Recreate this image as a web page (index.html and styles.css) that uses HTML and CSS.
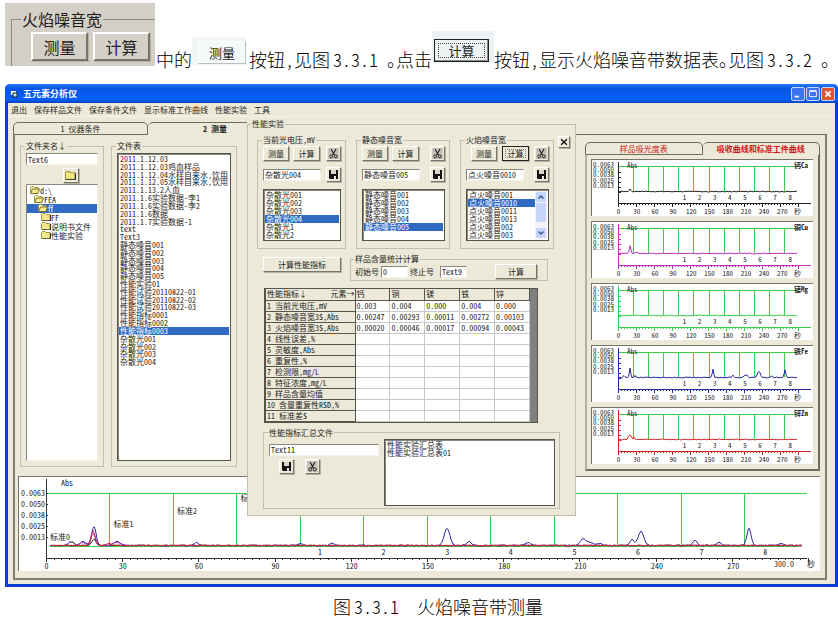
FILE: index.html
```html
<!DOCTYPE html>
<html lang="zh-CN">
<head>
    <meta charset="UTF-8">
    <meta name="viewport" content="width=device-width, initial-scale=1.0">
    <title>五元素分析仪</title>
    <link rel="stylesheet" href="styles.css">
</head>
<body>
    <svg class="sprite" aria-hidden="true">
        <symbol id="i-cut" viewBox="0 0 11 11">
            <rect width="11" height="11" fill="#c8c6bc"/>
            <path d="M3 1l3.4 6M8 1L4.6 7" stroke="#222" stroke-width="1.2" fill="none"/>
            <circle cx="3.2" cy="8.4" r="1.5" stroke="#222" fill="none"/>
            <circle cx="7.8" cy="8.4" r="1.5" stroke="#222" fill="none"/>
        </symbol>
        <symbol id="i-save" viewBox="0 0 11 11">
            <path d="M1 1h9v9H2L1 9z" fill="#111"/>
            <path d="M3 1h5v4H3z" fill="#d8d6cc"/>
            <path d="M6 7h2v3H6z" fill="#eee"/>
        </symbol>
        <symbol id="i-folder" viewBox="0 0 10 8">
            <path d="M.5 7.500v-6l1-1h2.500l1 1h4v6z" fill="#f3e98a" stroke="#a39a3c"/>
            <path d="M9.500 2v6H1" stroke="#333" fill="none"/>
        </symbol>
        <symbol id="i-open" viewBox="0 0 10 8">
            <path d="M.5 7V1.500l1-1h2l1 1h3.500V3" fill="#f7f2b4" stroke="#a39a3c"/>
            <path d="M.5 7.500L2.500 3h7L8 7.500z" fill="#f3e98a" stroke="#7b7430"/>
        </symbol>
    </svg>

    <div class="intro">
        <div class="snippet">
            <fieldset class="snippet-group">
                <legend>火焰噪音宽</legend>
                <button class="btn big">测量</button>
                <button class="btn big">计算</button>
            </fieldset>
        </div>
        <p>中的</p>
        <div class="snippet-pale"><button class="pale">测量</button></div>
        <p>按钮,见图<span class="num">3.3.1</span> <span class="half">。</span>点击</p>
        <div class="snippet-focus"><button class="focus">计算</button></div>
        <p>按钮,显示火焰噪音带数据表<span class="half">。</span>见图<span class="num">3.3.2</span> <span class="half">。</span></p>
    </div>

    <div class="window">
        <div class="titlebar">
            <svg class="app-icon" viewBox="0 0 8 8"><path d="M1 1h5v4H1z" fill="#fff"/><path d="M3 3h4v4H3z" fill="#cfe0ff" stroke="#123"/></svg>
            <h1>五元素分析仪</h1>
            <button class="cap" aria-label="最小化"><svg viewBox="0 0 14 14"><path d="M3 10h5" stroke="#fff" stroke-width="2"/></svg></button>
            <button class="cap" aria-label="最大化"><svg viewBox="0 0 14 14"><path d="M3 4h8v6H3zM3 3h8" stroke="#fff" fill="none"/></svg></button>
            <button class="cap cap-close" aria-label="关闭"><svg viewBox="0 0 14 14"><path d="M4 4l6 6M10 4l-6 6" stroke="#fff" stroke-width="2"/></svg></button>
        </div>
        <nav class="menu">
            <a href="#">退出</a>
            <a href="#">保存样品文件</a>
            <a href="#">保存条件文件</a>
            <a href="#">显示标准工作曲线</a>
            <a href="#">性能实验</a>
            <a href="#">工具</a>
        </nav>

        <div class="notebook">
            <div class="tabs">
                <button class="tab">1 仪器条件</button>
                <button class="tab tab-on">2 测量</button>
                <div class="tab-fill"></div>
            </div>
            <div class="page">
                <div class="upper">
                    <fieldset class="group folders">
                        <legend>文件夹名↓</legend>
                        <input class="field" type="text" value="Text6" aria-label="文件夹名">
                        <button class="btn icon" aria-label="打开"><svg viewBox="0 0 10 8"><use href="#i-folder"/></svg></button>
                        <ul class="tree" role="listbox" aria-label="文件夹">
                            <li role="option"><svg><use href="#i-open"/></svg>d:\</li>
                            <li role="option" class="in1"><svg><use href="#i-open"/></svg>FEA</li>
                            <li role="option" class="in2 sel" aria-selected="true"><svg><use href="#i-open"/></svg>ff</li>
                            <li role="option" class="in3"><svg><use href="#i-folder"/></svg>FF</li>
                            <li role="option" class="in3"><svg><use href="#i-folder"/></svg>说明书文件</li>
                            <li role="option" class="in3"><svg><use href="#i-folder"/></svg>性能实验</li>
                        </ul>
                    </fieldset>

                    <fieldset class="group files">
                        <legend>文件表</legend>
                        <div class="list">
                            <ul class="file-rows" role="listbox" aria-label="文件表">
                                <li role="option">2011.1.12.03</li>
                                <li role="option">2011.1.12.03鸡血样品</li>
                                <li role="option">2011.1.12.04水样自来水，饮用</li>
                                <li role="option">2011.1.12.05水样自来水，饮用</li>
                                <li role="option">2011.1.13.2人血</li>
                                <li role="option">2011.1.6实验数据-李1</li>
                                <li role="option">2011.1.6实验数据-李2</li>
                                <li role="option">2011.1.6数据</li>
                                <li role="option">2011.1.7实验数据-1</li>
                                <li role="option">text</li>
                                <li role="option">Text3</li>
                                <li role="option">静态噪音001</li>
                                <li role="option">静态噪音002</li>
                                <li role="option">静态噪音003</li>
                                <li role="option">静态噪音004</li>
                                <li role="option">静态噪音005</li>
                                <li role="option">性能实验01</li>
                                <li role="option">性能试验20110822-01</li>
                                <li role="option">性能试验20110822-02</li>
                                <li role="option">性能试验20110822-03</li>
                                <li role="option">性能指标0001</li>
                                <li role="option">性能指标0002</li>
                                <li role="option" class="sel" aria-selected="true">性能指标0003</li>
                                <li role="option">杂散光001</li>
                                <li role="option">杂散光002</li>
                                <li role="option">杂散光003</li>
                                <li role="option">杂散光004</li>
                            </ul>
                        </div>
                    </fieldset>

                    <div class="curves">
                        <div class="tabs">
                            <button class="tab tab-red">样品吸光度表</button>
                            <button class="tab tab-red tab-on">吸收曲线和标准工件曲线</button>
                        </div>
                        <div class="curve-panel" id="curves"></div>
                    </div>
                </div>

                <div class="chart overview" id="overview"></div>
            </div>
        </div>

        <div class="dialog">
            <fieldset class="dialog-frame">
                <legend>性能实验</legend>
                <div class="row top-row">
                    <fieldset class="group meter meter-narrow">
                        <legend>当前光电压,mV</legend>
                        <div class="row tools">
                            <button class="btn">测量</button>
                            <button class="btn">计算</button>
                            <button class="btn icon" aria-label="删除"><svg><use href="#i-cut"/></svg></button>
                        </div>
                        <div class="row name">
                            <input class="field" type="text" value="杂散光004" aria-label="光电压文件">
                            <button class="btn icon" aria-label="保存"><svg><use href="#i-save"/></svg></button>
                        </div>
                        <ul class="list short" role="listbox" aria-label="光电压">
                            <li role="option">杂散光001</li>
                            <li role="option">杂散光002</li>
                            <li role="option">杂散光003</li>
                            <li role="option" class="sel" aria-selected="true">杂散光004</li>
                            <li role="option">杂散光1</li>
                            <li role="option">杂散光2</li>
                        </ul>
                    </fieldset>
                    <fieldset class="group meter">
                        <legend>静态噪音宽</legend>
                        <div class="row tools">
                            <button class="btn">测量</button>
                            <button class="btn">计算</button>
                            <button class="btn icon" aria-label="删除"><svg><use href="#i-cut"/></svg></button>
                        </div>
                        <div class="row name">
                            <input class="field" type="text" value="静态噪音005" aria-label="静态噪音文件">
                            <button class="btn icon" aria-label="保存"><svg><use href="#i-save"/></svg></button>
                        </div>
                        <ul class="list short" role="listbox" aria-label="静态噪音">
                            <li role="option">静态噪音001</li>
                            <li role="option">静态噪音002</li>
                            <li role="option">静态噪音003</li>
                            <li role="option">静态噪音004</li>
                            <li role="option" class="sel" aria-selected="true">静态噪音005</li>
                        </ul>
                    </fieldset>
                    <fieldset class="group meter">
                        <legend>火焰噪音宽</legend>
                        <div class="row tools tools-right">
                            <button class="btn">测量</button>
                            <button class="btn btn-default">计算</button>
                            <button class="btn icon" aria-label="删除"><svg><use href="#i-cut"/></svg></button>
                        </div>
                        <div class="row name">
                            <input class="field" type="text" value="点火噪音0010" aria-label="火焰噪音文件">
                            <button class="btn icon" aria-label="保存"><svg><use href="#i-save"/></svg></button>
                        </div>
                        <div class="list short with-bar">
                            <ul role="listbox" aria-label="火焰噪音">
                                <li role="option">点火噪音001</li>
                                <li role="option" class="sel" aria-selected="true">点火噪音0010</li>
                                <li role="option">点火噪音0011</li>
                                <li role="option">点火噪音0013</li>
                                <li role="option">点火噪音002</li>
                                <li role="option">点火噪音003</li>
                            </ul>
                            <svg class="bar" viewBox="0 0 12 48">
                                <rect width="12" height="48" fill="#f3f3f8"/>
                                <rect x="1" y="1" width="10" height="10" rx="1" fill="#c6d5fb"/>
                                <path d="M3.500 7.500L6 5l2.500 2.500" stroke="#3f5a96" stroke-width="1.500" fill="none"/>
                                <rect x="1" y="12" width="10" height="19" rx="1" fill="#c6d5fb"/>
                                <rect x="1" y="37" width="10" height="10" rx="1" fill="#c6d5fb"/>
                                <path d="M3.500 40.500L6 43l2.500-2.500" stroke="#3f5a96" stroke-width="1.500" fill="none"/>
                            </svg>
                        </div>
                    </fieldset>
                    <button class="btn close" aria-label="关闭"><svg viewBox="0 0 7 7"><path d="M1 1l5 5M6 1L1 6" stroke="#111" stroke-width="1.2"/></svg></button>
                </div>

                <div class="row calc-row">
                    <button class="btn wide">计算性能指标</button>
                    <fieldset class="group stat">
                        <legend>样品含量统计计算</legend>
                        <label for="first">初始号</label>
                        <input class="field" id="first" type="text" value="0">
                        <label for="last">终止号</label>
                        <input class="field" id="last" type="text" value="Text9">
                        <button class="btn">计算</button>
                    </fieldset>
                </div>

                <div class="grid-wrap">
                    <table>
                        <thead>
                            <tr><th class="corner"><span>性能指标↓</span><span>元素→</span></th><th>钙</th><th>铜</th><th>镁</th><th>铁</th><th>锌</th></tr>
                        </thead>
                        <tbody>
                            <tr><th>1 当前光电压，mV</th><td>0.003</td><td>0.004</td><td>0.000</td><td>0.004</td><td>0.000</td></tr>
                            <tr><th>2 静态噪音宽3S，Abs</th><td>0.00247</td><td>0.00293</td><td>0.00011</td><td>0.00272</td><td>0.00103</td></tr>
                            <tr><th>3 火焰噪音宽3S,Abs</th><td>0.00020</td><td>0.00046</td><td>0.00017</td><td>0.00094</td><td>0.00043</td></tr>
                            <tr><th>4 线性误差，%</th><td></td><td></td><td></td><td></td><td></td></tr>
                            <tr><th>5 灵敏度,Abs</th><td></td><td></td><td></td><td></td><td></td></tr>
                            <tr><th>6 重复性，%</th><td></td><td></td><td></td><td></td><td></td></tr>
                            <tr><th>7 检测限，mg/L</th><td></td><td></td><td></td><td></td><td></td></tr>
                            <tr><th>8 特征浓度，mg/L</th><td></td><td></td><td></td><td></td><td></td></tr>
                            <tr><th>9 样品含量均值</th><td></td><td></td><td></td><td></td><td></td></tr>
                            <tr><th>10 含量重复性RSD，%</th><td></td><td></td><td></td><td></td><td></td></tr>
                            <tr><th>11 标准差S</th><td></td><td></td><td></td><td></td><td></td></tr>
                        </tbody>
                    </table>
                </div>

                <fieldset class="group summary">
                    <legend>性能指标汇总文件</legend>
                    <div class="summary-left">
                        <input class="field" type="text" value="Text11" aria-label="汇总文件">
                        <div class="row summary-tools">
                            <button class="btn icon" aria-label="保存"><svg><use href="#i-save"/></svg></button>
                            <button class="btn icon" aria-label="删除"><svg><use href="#i-cut"/></svg></button>
                        </div>
                    </div>
                    <ul class="list summary-list" role="listbox" aria-label="汇总文件">
                        <li role="option">性能实验汇总表</li>
                        <li role="option">性能实验汇总表01</li>
                    </ul>
                </fieldset>
            </fieldset>
        </div>
    </div>

    <p class="caption">图<span class="num">3.3.1</span>&nbsp; 火焰噪音带测量</p>

    <script src="script.js"></script>
</body>
</html>
```

FILE: styles.css
```css
:root {
    --face: #ece9d8;
    --line: #c2bfae;
    --dark: #6c6c60;
    --select: #316ac5;
    --text: #1c1c1c;
}
* {
    box-sizing: border-box;
}
body {
    margin: 0;
    background: #fff;
    color: var(--text);
    font-family: "Noto Sans CJK SC", "Liberation Sans", sans-serif;
    font-feature-settings: "hwid";
    font-size: 8px;
    line-height: 8px;
    white-space: nowrap;
}
button, input {
    font: inherit;
    font-feature-settings: inherit;
    color: inherit;
    margin: 0;
    padding: 0;
}
fieldset {
    min-width: 0;
    margin: 0;
    padding: 0;
    border: 1px solid var(--line);
}
legend {
    padding: 0 1px;
    margin-left: -1px;
}
ul {
    list-style: none;
    margin: 0;
    padding: 0;
}
.sprite {
    display: none;
}
.row {
    display: flex;
}

/* text line above the window */
.intro {
    display: flex;
    align-items: flex-end;
    height: 69px;
    margin-bottom: 15px;
    padding-left: 5px;
}
.intro p, .caption {
    margin: 0;
    font-size: 18px;
    line-height: 20px;
    font-weight: 300;
    color: #000;
}
.num {
    margin-left: 3px;
}
.half {
    font-feature-settings: "halt";
}
.snippet {
    width: 150px;
    height: 63px;
    margin: 0 1px 3px 0;
    padding: 8px 0 0 6px;
    background: #d4d0c8;
    overflow: hidden;
}
.snippet-group {
    height: 60px;
    padding: 5px 0 0 19px;
    border-color: #8c8982;
    border-width: 1px 0 0 1px;
    font-size: 16px;
    line-height: 16px;
    display: flex;
    gap: 5px;
}
.snippet-group legend {
    margin-left: -10px;
}
.btn {
    height: 15px;
    width: 27px;
    flex: none;
    background: var(--face);
    border: 1px solid;
    border-color: #fff #77756a #77756a #fff;
    box-shadow: 1px 1px 0 #b5b2a3;
}
.btn.big {
    width: 57px;
    height: 29px;
    background: #d4d0c8;
    border-width: 2px;
}
.snippet-pale {
    width: 54px;
    margin: 0 3px 4px 0;
    padding: 4px 0 1px 6px;
    background: #f1f5f6;
}
.pale {
    width: 48px;
    height: 23px;
    font-size: 13px;
    background: #f6f9fa;
    border: 1px solid;
    border-color: #fff #b9bec0 #b9bec0 #fff;
}
.snippet-focus {
    width: 62px;
    margin: 0 0 6px;
    padding: 8px 5px 1px 2px;
    background: #edf2f5;
}
.focus {
    display: block;
    width: 55px;
    height: 23px;
    font-size: 13px;
    background: #eef2f2;
    border: 1px solid #222;
    outline: 1px dotted #444;
    outline-offset: -5px;
    box-shadow: inset -1px -1px 0 #888;
}

/* window */
.window {
    position: relative;
    margin-left: 5px;
    border: 3px solid #0a3bd0;
    border-top: 0;
    border-radius: 5px 5px 0 0;
    background: var(--face);
}
.titlebar {
    display: flex;
    align-items: center;
    gap: 1px;
    height: 19px;
    margin: 0 -3px;
    padding: 0 3px 0 5px;
    border-radius: 5px 5px 0 0;
    background: linear-gradient(#2a7bf5, #0655e5 25%, #0560f8 80%, #0443c4);
    color: #fff;
}
.titlebar h1 {
    margin: 0 auto 0 4px;
    font-size: 9px;
    line-height: 12px;
    font-weight: bold;
}
.app-icon {
    width: 8px;
    height: 8px;
}
.cap {
    width: 14px;
    height: 14px;
    background: #3b74ee;
    border: 1px solid #c4d6fb;
    border-radius: 2px;
}
.cap svg {
    display: block;
    width: 12px;
    height: 12px;
}
.cap-close {
    background: #dc5530;
}
.menu {
    display: flex;
    gap: 7px;
    height: 14px;
    padding: 3px;
    border-bottom: 1px solid #f6f4ea;
}
.menu a {
    color: inherit;
    text-decoration: none;
}
.notebook {
    margin: 5px 8px 4px 5px;
}
.tabs {
    display: flex;
    height: 13px;
}
.tab {
    width: 135px;
    background: none;
    border: 1px solid var(--dark);
    border-radius: 5px 5px 0 0;
}
.tab-on {
    border-bottom: 0;
    border-left: 0;
    font-weight: bold;
}
.tab-fill {
    flex: 1;
    border-bottom: 1px solid var(--dark);
}
.page {
    padding: 7px 5px 7px 3px;
    border: 2px solid #7d8073;
    border-top: 0;
}
.upper {
    display: grid;
    grid-template-columns: 84px 126px 1fr;
    column-gap: 7px;
    padding-left: 2px;
}
.curves {
    justify-self: end;
    width: 235px;
}
.folders, .files {
    margin-bottom: 4px;
    padding: 3px 5px 5px;
}
.field {
    display: block;
    width: 100%;
    height: 12px;
    padding-left: 1px;
    background: #fff;
    border: 1px solid;
    border-color: #8a887c #f6f4ea #f6f4ea #8a887c;
}
.icon {
    width: 15px;
    padding: 0 1px;
}
.icon svg {
    display: block;
    width: 11px;
    height: 11px;
}
.folders .icon {
    margin: 3px 0 1px 37px;
    width: 16px;
}
.sel {
    background: var(--select);
    color: #fff;
}
.folders {
    display: flex;
    flex-direction: column;
}
.tree {
    flex: 1;
    padding-top: 1px;
    background: #fff;
    border: 1px solid;
    border-color: #8a887c #f6f4ea #f6f4ea #8a887c;
    line-height: 9px;
}
.tree li {
    display: flex;
    padding-left: 3px;
}
.tree svg {
    width: 10px;
    height: 8px;
}
.tree .in1 {
    padding-left: 7px;
}
.tree .in2 {
    padding-left: 11px;
}
.tree .in3 {
    padding-left: 14px;
}
.list {
    background: #fff;
    border: 1px solid #55554c;
    box-shadow: inset 1px 1px 0 #8a887c;
    overflow: hidden;
}
.list li {
    padding-left: 1px;
}
.files .list {
    height: 100%;
    padding: 1px;
}
.file-rows {
    display: grid;
    grid-auto-rows: minmax(0, 1fr);
    height: 211px;
}

/* right side curves */
.curves .tab {
    width: 50%;
}
.tab-red {
    color: #d01818;
}
.curve-panel {
    display: flex;
    flex-direction: column;
    gap: 5px;
    padding: 4px 5px 5px 4px;
    border: 2px solid var(--dark);
    border-top: 0;
    border-left-color: #b3b0a2;
}
.chart {
    background: #fff;
    border: 1px solid #77756a;
    border-right: 0;
    border-bottom: 0;
}
.chart svg {
    display: block;
    width: 100%;
}
.chart text {
    fill: var(--text);
}
.chart .element {
    font-weight: bold;
}
.overview {
    margin-top: 5px;
}
.small text {
    font-size: 7px;
}

/* performance dialog */
.dialog {
    position: absolute;
    left: 239px;
    top: 36px;
    width: 329px;
    background: var(--face);
}
.dialog-frame {
    padding: 8px 4px 6px 9px;
}
.dialog-frame > legend {
    margin-left: -6px;
}
.meter {
    width: 94px;
    padding: 2px 4px 7px 5px;
}
.meter-narrow {
    width: 89px;
}
.top-row {
    gap: 10px;
}
.tools {
    gap: 4px;
}
.tools .btn:first-child {
    width: 26px;
}
.tools .icon, .name .icon {
    margin-left: auto;
}
.tools-right {
    padding-left: 5px;
    gap: 5px;
}
.btn-default {
    border: 1px solid #222;
    outline: 1px dotted #777;
    outline-offset: -4px;
}
.name {
    margin: 6px 0 7px;
    align-items: center;
}
.name .field {
    width: 58px;
}
.short {
    height: 52px;
    padding: 1px;
}
.with-bar {
    display: flex;
}
.with-bar ul {
    flex: 1;
}
.bar {
    width: 12px;
    height: 48px;
}
.top-row .close {
    width: 12px;
    height: 12px;
    margin-left: -6px;
    padding: 1px;
}
.close svg {
    display: block;
    width: 8px;
    height: 8px;
}
.calc-row {
    gap: 9px;
    margin: 6px 0 7px 6px;
    align-items: flex-start;
}
.wide {
    width: 78px;
    margin-top: 2px;
}
.stat {
    width: 198px;
    display: flex;
    align-items: center;
    gap: 2px;
    padding: 1px 10px 1px 4px;
}
.stat .field {
    width: 27px;
}
.stat label + .field + label {
    margin-right: 4px;
}
.stat .btn {
    width: 42px;
    margin-left: auto;
}
.grid-wrap {
    width: 274px;
    margin-left: 7px;
    padding-right: 7px;
    background: #808080;
    border: 1px solid #55554c;
    border-left-width: 2px;
}
table {
    width: 100%;
    border-collapse: collapse;
    table-layout: fixed;
    background: #fff;
}
th, td {
    height: 11px;
    padding: 0 0 0 1px;
    border: 1px solid #c8c8c8;
    border-width: 0 1px 1px 0;
    text-align: left;
    font-weight: normal;
}
th {
    background: var(--face);
    border-color: #55554c;
}
.corner {
    width: 89px;
}
.corner span + span {
    float: right;
}
.summary {
    display: flex;
    width: 297px;
    margin: 6px 0 0 6px;
    padding: 2px 4px 2px 5px;
}
.summary-left {
    width: 110px;
    margin-right: 5px;
    padding-top: 5px;
}
.summary-tools {
    gap: 11px;
    padding: 3px 10px;
}
.summary-list {
    flex: 1;
    height: 67px;
    padding: 1px;
}

.caption {
    padding: 9px 0 0 38px;
    text-align: center;
}
```

FILE: script.js
```javascript
const NS = 'http://www.w3.org/2000/svg';
const LEVELS = ['0.0063', '0.0050', '0.0038', '0.0025', '0.0013'];

function add(parent, name, attrs, text) {
    const el = document.createElementNS(NS, name);
    for (const key in attrs) el.setAttribute(key, attrs[key]);
    if (text !== undefined) el.textContent = text;
    parent.appendChild(el);
    return el;
}

function line(svg, x1, y1, x2, y2, color) {
    add(svg, 'path', { d: `M${x1} ${y1}L${x2} ${y2}`, stroke: color, fill: 'none' });
}

// peaks: [x, height, half width]
function curve(svg, from, to, base, peaks, color, seed, noise) {
    let d = '';
    for (let x = from; x <= to; x++) {
        seed = (seed * 1103515245 + 12345) % 2147483648;
        let y = base - (seed / 2147483648) * noise;
        for (const [px, h, w] of peaks) y -= h * Math.exp(-(((x - px) / w) ** 2));
        d += (d ? 'L' : 'M') + x + ' ' + y.toFixed(1);
    }
    add(svg, 'path', { d: d, stroke: color, fill: 'none' });
}

function small(label, color, peaks, seed) {
    const box = document.createElement('div');
    box.className = 'chart small';
    const svg = add(box, 'svg', { viewBox: '0 0 221 56' });
    const green = '#3ccf4e';
    line(svg, 27, 6.5, 206, 6.5, green);
    for (let i = 0; i < 11; i++) {
        const x = Math.round(41 + i * 15.1) + 0.5;
        line(svg, x, 6.5, x, 31, green);
    }
    LEVELS.forEach((t, i) => {
        add(svg, 'text', { x: 1, y: 7 + Math.round(i * 5.2) }, t);
        line(svg, 27, 12.5 + i * 5, 29, 12.5 + i * 5, color);
    });
    line(svg, 26.5, 2, 26.5, 46, color);
    line(svg, 26, 43.5, 219, 43.5, color);
    for (let i = 0; i <= 60; i++) {
        line(svg, 26.5 + i * 3, 43.5, 26.5 + i * 3, i % 6 ? 45 : 47, color);
    }
    for (let i = 0; i < 10; i++) {
        add(svg, 'text', { x: 26.5 + i * 18.2, y: 54, 'text-anchor': 'middle' }, i * 30);
    }
    for (let i = 0; i < 8; i++) {
        add(svg, 'text', { x: 92.5 + i * 15.1, y: 40, 'text-anchor': 'middle' }, i + 1);
    }
    add(svg, 'text', { x: 202, y: 54 }, '秒');
    add(svg, 'text', { x: 35, y: 8 }, 'Abs');
    add(svg, 'text', { x: 202, y: 8, class: 'element' }, label);
    curve(svg, 27, 205, 32, peaks, color, seed, 1);
    document.getElementById('curves').appendChild(box);
}

small('钙Ca', '#222222', [[38, 2, 1]], 3);
small('铜Cu', '#c030c0', [[38, 8, 1], [43, 1, 3]], 7);
small('镁Mg', '#3ccf4e', [], 11);
small('铁Fe', '#2828a0', [[38, 9, 1], [32, 2, 1], [43, 2, 1], [121, 8, 1], [141, 2, 1], [154, 3, 2], [167, 6, 2], [180, 2, 1], [193, 8, 1]], 17);
small('锌Zn', '#cc2828', [[38, 5, 2], [42, 2, 1]], 23);

function overview() {
    const svg = add(document.getElementById('overview'), 'svg', { viewBox: '0 0 801 94' });
    const green = '#3ccf4e';
    const ink = '#333333';
    line(svg, 27, 16.5, 788, 16.5, green);
    line(svg, 31, 69.5, 780, 69.5, green);
    for (let i = 0; i < 11; i++) {
        const x = Math.round(90 + i * 63.5) + 0.5;
        line(svg, x, 16.5, x, 69, green);
    }
    LEVELS.forEach((t, i) => {
        add(svg, 'text', { x: 2, y: 19 + i * 11 }, t);
        line(svg, 27, 16.5 + i * 11, 29, 16.5 + i * 11, ink);
    });
    line(svg, 27.5, 2, 27.5, 84, ink);
    line(svg, 27, 81.5, 788, 81.5, ink);
    for (let i = 0; i <= 100; i += 1) {
        const x = Math.round(27 + i * 7.62) + 0.5;
        line(svg, x, 81, x, i % 10 ? 83 : 85, ink);
    }
    for (let i = 0; i < 10; i++) {
        add(svg, 'text', { x: 27.5 + i * 76.3, y: 92, 'text-anchor': 'middle' }, i * 30);
    }
    for (let i = 0; i < 8; i++) {
        add(svg, 'text', { x: 301 + i * 63.6, y: 78, 'text-anchor': 'middle' }, i + 1);
    }
    add(svg, 'text', { x: 42, y: 9 }, 'Abs');
    for (let i = 0; i < 4; i++) {
        add(svg, 'text', { x: 31 + i * 63.5, y: 63 - i * 13 }, '标准' + i);
    }
    add(svg, 'text', { x: 755, y: 90 }, '300.0');
    add(svg, 'text', { x: 788, y: 90 }, '秒');

    curve(svg, 31, 783, 69, [[75, 6, 3], [52, 4, 4]], '#222222', 5, 1);
    curve(svg, 31, 783, 69, [[75, 19, 3], [64, 4, 4], [98, 4, 4], [177, 3, 3],
        [281, 2, 3], [313, 2, 3], [428, 17, 4], [450, 4, 3], [509, 3, 4], [564, 6, 4], [571, 3, 5],
        [581, 2, 3], [613, 6, 3], [622, 14, 4], [676, 5, 3], [700, 3, 3], [730, 17, 3], [762, 2, 3]], '#2828a0', 9, 1);
    curve(svg, 31, 783, 69, [[74, 15, 3], [63, 3, 4], [98, 3, 6]], '#c030c0', 13, 1);
    curve(svg, 31, 783, 69, [[74, 12, 3], [90, 2, 4]], '#cc2828', 21, 1);
}
overview();
```
